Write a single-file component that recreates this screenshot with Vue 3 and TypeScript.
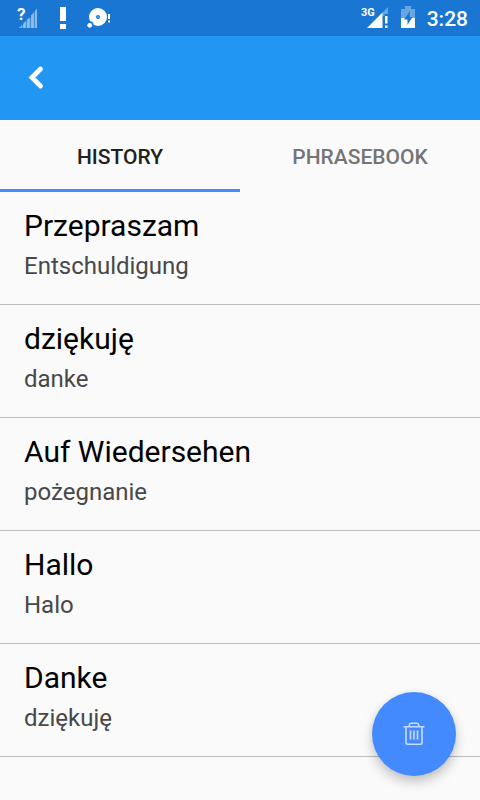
<script setup lang="ts">
import { ref } from 'vue'

interface Entry {
  source: string
  translation: string
}

type Tab = 'history' | 'phrasebook'

const tabs: { id: Tab; label: string }[] = [
  { id: 'history', label: 'HISTORY' },
  { id: 'phrasebook', label: 'PHRASEBOOK' },
]

const activeTab = ref<Tab>('history')

const entries = ref<Entry[]>([
  { source: 'Przepraszam', translation: 'Entschuldigung' },
  { source: 'dziękuję', translation: 'danke' },
  { source: 'Auf Wiedersehen', translation: 'pożegnanie' },
  { source: 'Hallo', translation: 'Halo' },
  { source: 'Danke', translation: 'dziękuję' },
])

function clearHistory(): void {
  entries.value = []
}
</script>

<template>
  <div class="screen">
    <div class="status-bar">
      <div class="status-group notifications">
        <svg width="24" height="24" viewBox="0 0 24 24" aria-hidden="true">
          <path d="M3 22l3.300-3.300V22zM7 22v-4l3.300-3.500V22zM11 22v-8.300l1.300-1.400h2V22zM15 22V9.500l3-3.200V22zM18.700 22V5.500L21 2.500V22z" fill="#fff" fill-opacity="0.5" />
          <text class="query" x="1" y="14">?</text>
        </svg>
        <svg width="24" height="24" viewBox="0 0 24 24" fill="#fff" aria-hidden="true">
          <rect x="8" y="1" width="6" height="14" />
          <rect x="8" y="18" width="6" height="5" />
        </svg>
        <svg width="24" height="24" viewBox="0 0 24 24" fill="#fff" aria-hidden="true">
          <path fill-rule="evenodd" d="M10 2a9 9 0 1 1 0 18a9 9 0 0 1 0-18zM10 9a2 2 0 1 0 0 4a2 2 0 0 0 0-4z" />
          <circle cx="1.700" cy="19.300" r="4" fill="#1976d2" />
          <circle cx="1.700" cy="19.300" r="2.400" />
          <circle cx="10" cy="11" r="0.600" />
          <rect x="20" y="8" width="2" height="5" />
          <rect x="20" y="14.500" width="2" height="2" />
        </svg>
      </div>
      <div class="status-group">
        <svg width="28" height="24" viewBox="0 0 28 24" aria-hidden="true">
          <path d="M27 1v7h-3.500v2H21.500V6.500z" fill="#fff" fill-opacity="0.35" />
          <path d="M6 22L21.500 6.500V22z" fill="#fff" />
          <rect x="24" y="10" width="2.500" height="7.500" fill="#fff" />
          <rect x="24" y="19.500" width="2.500" height="2.500" fill="#fff" />
          <text class="network" x="0" y="10">3G</text>
        </svg>
        <svg width="14" height="24" viewBox="0 0 14 24" aria-hidden="true">
          <path d="M0 3h4V0h6v3h4v10H0z" fill="#fff" fill-opacity="0.35" />
          <path d="M0 12h14v10H0z" fill="#fff" />
          <path d="M9 5L3 13.500h3.500V19L11.500 11H8.500z" fill="#1976d2" />
        </svg>
        <span class="clock">3:28</span>
      </div>
    </div>

    <header class="toolbar">
      <button class="back" type="button" aria-label="Back">
        <svg width="24" height="24" viewBox="0 0 24 24" aria-hidden="true">
          <path d="M16.500 3L8 11.500L16.500 20" fill="none" stroke="#fff" stroke-width="4.800" stroke-linecap="round" stroke-linejoin="miter" />
        </svg>
      </button>
    </header>

    <nav class="tabs" role="tablist">
      <button
        v-for="tab in tabs"
        :key="tab.id"
        class="tab"
        :class="{ active: tab.id === activeTab }"
        type="button"
        role="tab"
        :aria-selected="tab.id === activeTab"
        @click="activeTab = tab.id"
      >
        {{ tab.label }}
      </button>
    </nav>

    <ul v-if="activeTab === 'history'" class="entries">
      <li v-for="entry in entries" :key="entry.source" class="entry">
        <span class="source">{{ entry.source }}</span>
        <span class="translation">{{ entry.translation }}</span>
      </li>
    </ul>

    <button class="fab" type="button" aria-label="Clear history" @click="clearHistory">
      <svg width="24" height="24" viewBox="0 0 24 24" fill="none" stroke="#fff" stroke-opacity="0.7" stroke-width="1.600" aria-hidden="true">
        <path d="M1.500 4.700h21M7.300 4.500V3.300Q7.300 1.200 9.500 1.200H14.500Q16.700 1.200 16.700 3.300V4.500M4 5V20.500Q4 22.200 5.700 22.200H18.300Q20 22.200 20 20.500V5M8.500 8.500v9M12 8.500v9M15.500 8.500v9" />
      </svg>
    </button>
  </div>
</template>

<style>
body {
  background: #fafafa;
}
</style>

<style scoped>
.screen {
  display: flex;
  flex-direction: column;
  min-height: 100vh;
  background: #fafafa;
  font-family: Roboto, "Noto Sans", sans-serif;
}

button {
  margin: 0;
  padding: 0;
  border: 0;
  background: none;
  font-family: inherit;
  cursor: pointer;
}

svg {
  display: block;
  overflow: visible;
}

.status-bar {
  display: flex;
  align-items: center;
  justify-content: space-between;
  height: 36px;
  padding: 0 12px 0 16px;
  background: #1976d2;
}

.status-group {
  display: flex;
  align-items: center;
  gap: 12px;
}

.query {
  fill: #fff;
  font-size: 17px;
  font-weight: 700;
}

.network {
  fill: #fff;
  font-size: 11px;
  font-weight: 700;
}

.clock {
  padding-top: 2px;
  color: #fff;
  font-size: 21px;
  font-weight: 500;
  line-height: 24px;
}

.toolbar {
  display: flex;
  align-items: center;
  height: 84px;
  padding: 0 24px;
  background: #2196f3;
}

.tabs {
  display: flex;
  height: 72px;
}

.tab {
  flex: 1;
  padding-top: 5px;
  border-bottom: 3px solid transparent;
  color: #757575;
  font-size: 21px;
  font-weight: 500;
}

.tab.active {
  border-bottom-color: #448aff;
  color: #212121;
}

.entries {
  margin: 0;
  padding: 0;
  list-style: none;
}

.entry {
  display: flex;
  flex-direction: column;
  gap: 8px;
  padding: 16px 24px 24px;
  border-bottom: 1px solid #bdbdbd;
}

.source {
  color: #000;
  font-size: 30px;
  line-height: 36px;
}

.translation {
  color: #484848;
  font-size: 24px;
  line-height: 28px;
}

.fab {
  position: fixed;
  right: 24px;
  bottom: 24px;
  display: flex;
  align-items: center;
  justify-content: center;
  width: 84px;
  height: 84px;
  border-radius: 50%;
  background: #448aff;
  box-shadow: 0 6px 12px rgba(0, 0, 0, 0.22), 0 0 6px rgba(0, 0, 0, 0.06);
}
</style>
